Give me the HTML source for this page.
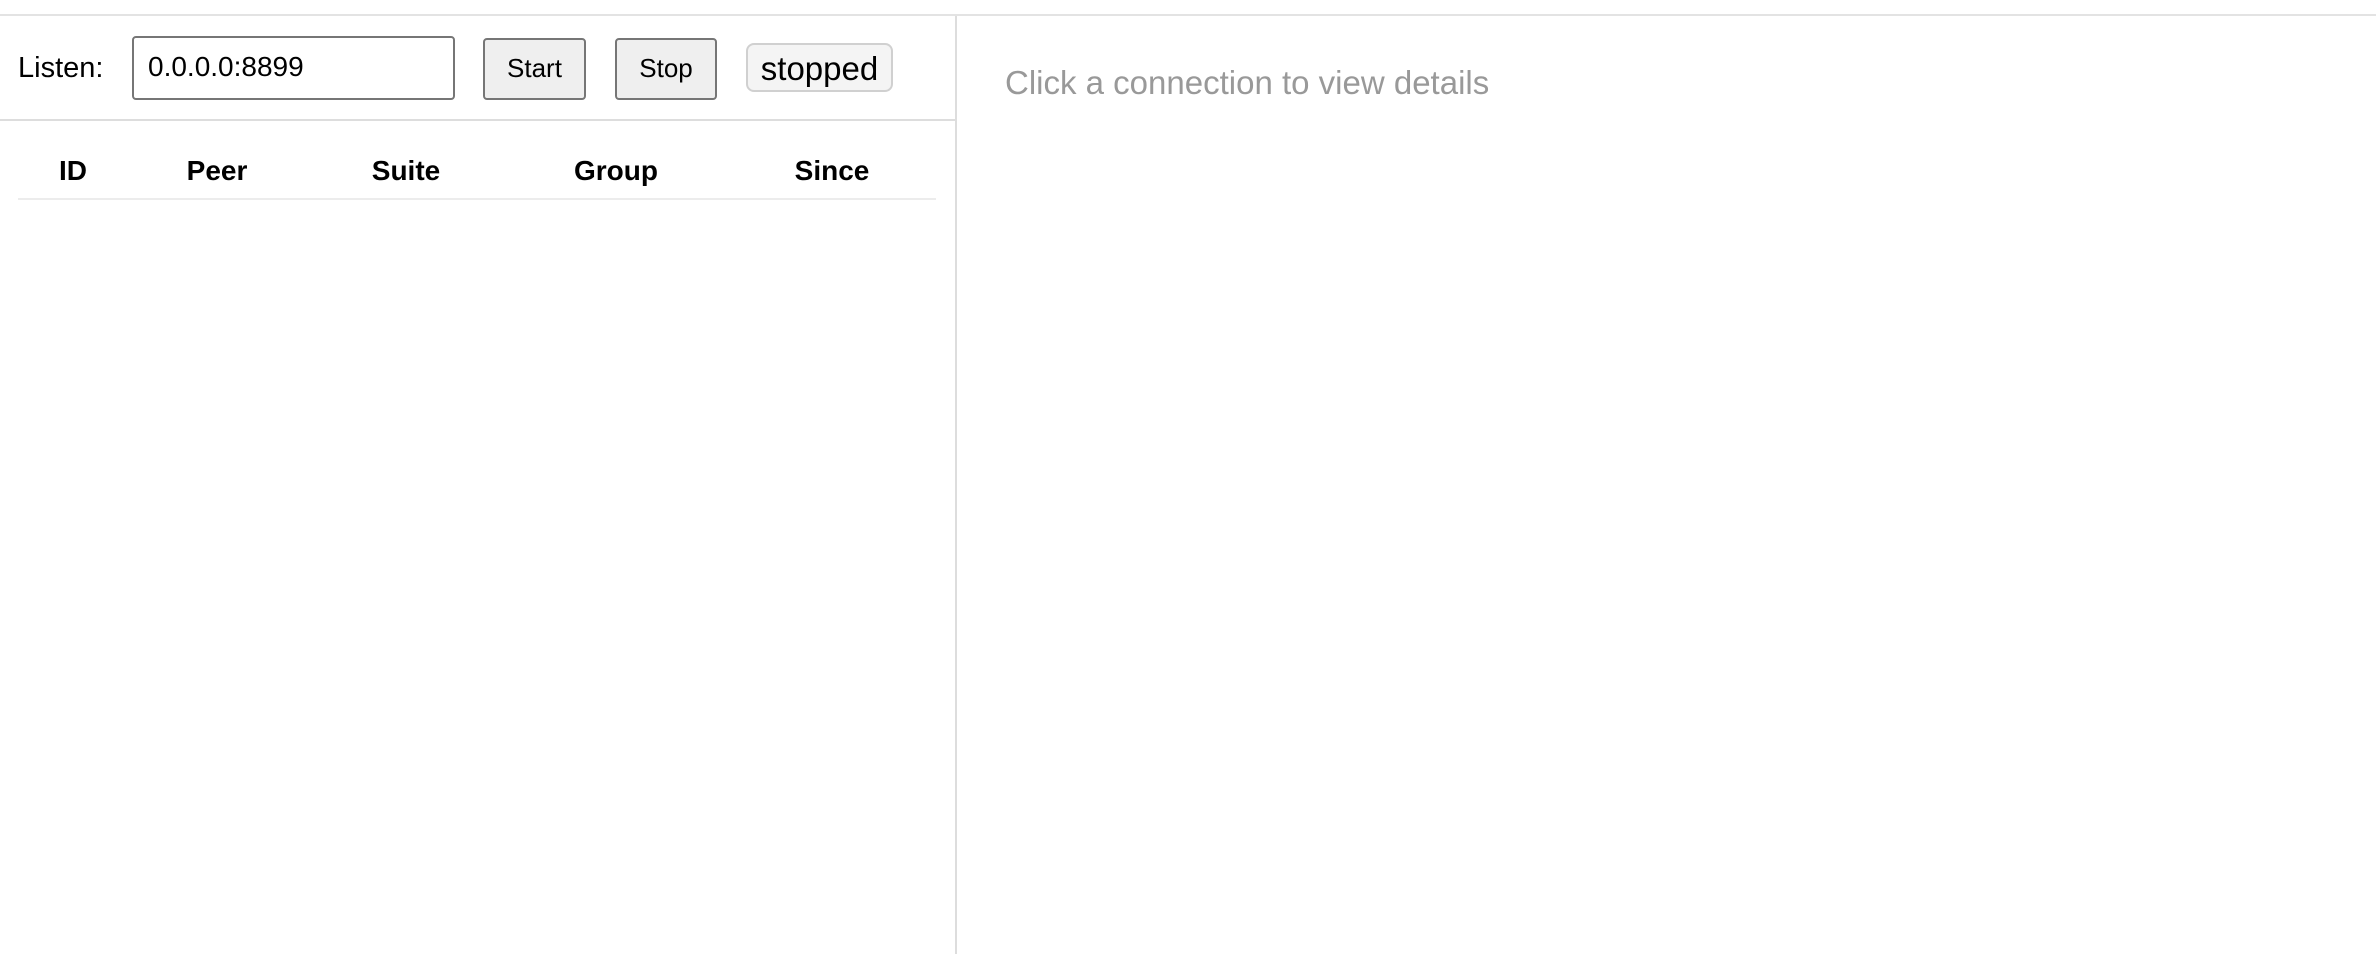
<!DOCTYPE html>
<html><head><meta charset="utf-8"><style>
html,body{margin:0;padding:0;width:2376px;height:954px;background:#fff;overflow:hidden;font-family:"Liberation Sans",Arial,sans-serif;}
.a{position:absolute;}
#top{left:0;top:14px;width:2376px;height:2px;background:#e3e3e3;}
#left{left:0;top:16px;width:955px;height:938px;border-right:2px solid #ddd;}
#tb{left:0;top:119px;width:955px;height:2px;background:#ddd;}
.lbl{left:18px;top:52px;font-size:29px;color:#000;line-height:32px;}
#inp{left:132px;top:36px;width:323px;height:64px;border:2px solid #767676;border-radius:4px;box-sizing:border-box;font-size:28px;line-height:58px;padding-left:14px;color:#000;}
.btn{top:38px;height:62px;box-sizing:border-box;border:2px solid #767676;border-radius:4px;background:#efefef;font-size:26px;line-height:56px;text-align:center;color:#000;}
#badge{left:746px;top:43px;width:147px;height:49px;box-sizing:border-box;border:2px solid #d0d0d0;border-radius:8px;background:#f4f4f4;font-size:33px;line-height:47px;text-align:center;color:#000;}
.th{top:154px;font-size:28px;font-weight:bold;line-height:34px;transform:translateX(-50%);white-space:nowrap;}
#hl{left:18px;top:198px;width:918px;height:2px;background:#ececec;}
#det{left:1005px;top:64px;font-size:33px;color:#999;line-height:38px;white-space:nowrap;}
</style></head><body>
<div class="a" id="top"></div>
<div class="a" id="left"></div>
<div class="a" id="tb"></div>
<div class="a lbl">Listen:</div>
<div class="a" id="inp">0.0.0.0:8899</div>
<div class="a btn" style="left:483px;width:103px;">Start</div>
<div class="a btn" style="left:615px;width:102px;">Stop</div>
<div class="a" id="badge">stopped</div>
<div class="a th" style="left:73px;">ID</div>
<div class="a th" style="left:217px;">Peer</div>
<div class="a th" style="left:406px;">Suite</div>
<div class="a th" style="left:616px;">Group</div>
<div class="a th" style="left:832px;">Since</div>
<div class="a" id="hl"></div>
<div class="a" id="det">Click a connection to view details</div>
</body></html>
